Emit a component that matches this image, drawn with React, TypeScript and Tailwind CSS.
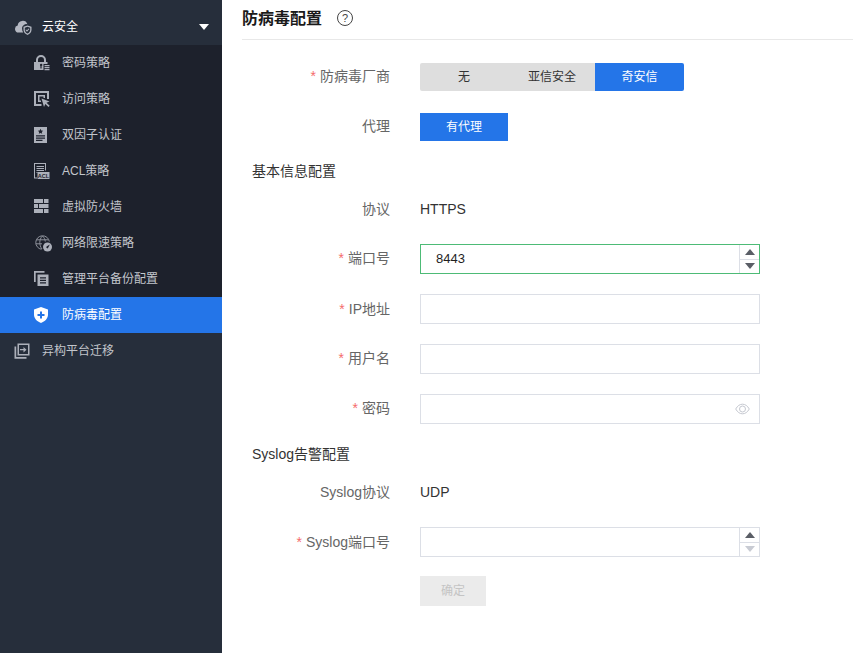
import React from "react";

const font = "font-['Liberation_Sans','Noto_Sans_CJK_SC',sans-serif]";

const Icon = ({ children }: { children: React.ReactNode }) => (
  <svg width="16" height="16" viewBox="0 0 16 16" fill="currentColor" className="shrink-0">
    {children}
  </svg>
);

const subMenus: { label: string; active?: boolean; icon: React.ReactNode }[] = [
  {
    label: "密码策略",
    icon: (
      <Icon>
        <path fillRule="evenodd" d="M0 15V7h2V5a5 5 0 0 1 10 0v2h1.500v2H9.500v6ZM4 7h6V5a3 3 0 0 0-6 0ZM6 10.200a1.200 1.200 0 0 0 .4.900V13.500h1.200v-2.400a1.200 1.200 0 1 0-1.600-.9Z" />
        <path d="M10.500 10h5v1.200h-5zM10.500 12h5v1.200h-5zM10.500 14h5v1.200h-5z" />
      </Icon>
    ),
  },
  {
    label: "访问策略",
    icon: (
      <Icon>
        <path d="M0 0h15v8h-2V2H2v11h5.500v2H0z" />
        <path d="M4 4h7v3H9.500V5.500h-4v4H7V11H4z" />
        <path d="M7.500 7.500l8 3-3 1.300 3.200 3-1.200 1.200-3.200-3-1.300 3z" />
      </Icon>
    ),
  },
  {
    label: "双因子认证",
    icon: (
      <Icon>
        <path fillRule="evenodd" d="M0 0h13v16H0ZM6.500 1.800l.8 1.700 1.900.2-1.400 1.300.4 1.800-1.700-.9-1.700.9.4-1.800-1.400-1.300 1.900-.2ZM2 8.200v1.200h9V8.200ZM2 10.500v1.200h9v-1.200ZM2 12.800v1.200h6.500v-1.200Z" />
      </Icon>
    ),
  },
  {
    label: "ACL策略",
    icon: (
      <Icon>
        <path d="M0 0h12v7.500h-1V1H1v13.500h2V15.500H0z" />
        <path d="M2.500 3h7.500v1H2.500zM2.500 5h7.500v1H2.500zM2.500 7h7.500v1H2.500zM2.500 9h1v1h-1z" />
        <rect x="3.500" y="9" width="12" height="7" />
        <text x="9.500" y="14.800" textAnchor="middle" fontSize="5.500" fontWeight="700" fill="#1d212c" fontFamily="'Liberation Sans', sans-serif">
          ACL
        </text>
      </Icon>
    ),
  },
  {
    label: "虚拟防火墙",
    icon: (
      <Icon>
        <path d="M0 0h9v4H0zM10 0h4.500v4H10zM0 5h4v4H0zM5 5h9.500v4H5zM0 10h9v4H0zM10 10h4.500v4H10z" />
      </Icon>
    ),
  },
  {
    label: "网络限速策略",
    icon: (
      <svg width="17" height="17" viewBox="0 0 17 17" fill="none" className="ml-[1px] shrink-0">
        <g stroke="#8d919b" strokeWidth="1">
          <path d="M6.500 14.300A6.800 6.800 0 1 1 14.300 6.500" />
          <path d="M7.500 1C5.500 3 4.800 5 4.800 7.500c0 2.200.6 4.500 2.200 6.500M7.500 1c1.800 1.800 2.600 3.500 2.800 5.500" />
          <path d="M1.500 4.800h11.500M.8 8.800h6.200" />
        </g>
        <circle cx="12.500" cy="12" r="4.500" fill="#acb0ba" />
        <path d="M14.800 9.500 12 11.300a1 1 0 1 0 1.300 1.300Z" fill="#1d212c" />
      </svg>
    ),
  },
  {
    label: "管理平台备份配置",
    icon: (
      <Icon>
        <path d="M0 0h10.500v1.700H1.700V11H0z" />
        <path fillRule="evenodd" d="M3.500 3.500H14.500V15H3.500ZM6 6.200v1.300h6V6.200ZM6 8.700v1.300h6V8.700ZM6 11.200v1.300h6v-1.300Z" />
      </Icon>
    ),
  },
  {
    label: "防病毒配置",
    active: true,
    icon: (
      <Icon>
        <path fillRule="evenodd" d="M7 0 14 2.500v5C14 11.500 11 14.500 7 16 3 14.500 0 11.500 0 7.500v-5ZM6 4.500V7H3.500v2H6v2.500h2V9h2.500V7H8V4.500Z" />
      </Icon>
    ),
  },
];

const Label = ({ text, required, raise }: { text: string; required?: boolean; raise?: boolean }) => (
  <div className={`w-[148px] shrink-0 text-right text-[14px] text-[#666666] ${raise ? "pb-[2px]" : ""}`}>
    {required && <span className="mr-[4px] text-[#f56c6c]">*</span>}
    {text}
  </div>
);

const Row = ({ children, className }: { children: React.ReactNode; className: string }) => (
  <div className={`flex items-center gap-[30px] ${className}`}>{children}</div>
);

const TextField = ({ children }: { children?: React.ReactNode }) => (
  <div className="flex h-[30px] w-[340px] items-center justify-end border border-[#dcdfe6] bg-white pr-[9px]">
    {children}
  </div>
);

const NumberField = ({ value, focused, downDisabled }: { value?: string; focused?: boolean; downDisabled?: boolean }) => (
  <div className={`flex h-[30px] w-[340px] border bg-white ${focused ? "border-[#4dbb76]" : "border-[#dcdfe6]"}`}>
    <div className="flex-1 pl-[15px] text-[13px] leading-[28px] text-[#1f1f1f]">{value}</div>
    <div className="flex w-[20px] flex-col border-l border-[#dcdfe6]">
      <div className="flex flex-1 items-center justify-center border-b border-[#dcdfe6]">
        <div className="h-0 w-0 border-x-[5px] border-b-[6px] border-x-transparent border-b-[#5a5e66]" />
      </div>
      <div className="flex flex-1 items-center justify-center">
        <div className={`h-0 w-0 border-x-[5px] border-t-[6px] border-x-transparent ${downDisabled ? "border-t-[#c8cbd3]" : "border-t-[#5a5e66]"}`} />
      </div>
    </div>
  </div>
);

export default function App() {
  return (
    <div className={`flex h-[653px] w-[853px] overflow-hidden bg-white ${font}`}>
      <aside className="flex w-[222px] shrink-0 flex-col bg-[#262e3b] pt-[9px] text-[12px]">
        <div className="flex h-[36px] items-center pl-[15px] pr-[13px] text-white">
          <svg width="17" height="16" viewBox="0 0 17 16" fill="#b4b8c2" className="shrink-0">
            <path d="M3.500 13.500a3.500 3.500 0 0 1-.8-6.900A5 5 0 0 1 12.400 5.200 4.500 4.500 0 0 0 7 9c0 1.800.4 3.300 1.200 4.500Z" />
            <path fillRule="evenodd" d="M8.500 7.800 12.500 6.500 16.500 7.800v3.200c0 2.300-1.700 3.800-4 5-2.300-1.200-4-2.700-4-5Zm1.300.9v2.300c0 1.600 1.100 2.700 2.700 3.600 1.600-.9 2.700-2 2.700-3.600V8.700l-2.700-.9Zm.6 2.300 1.600 1.700 2.400-2.700-.7-.6-1.700 1.900-.9-.9Z" />
          </svg>
          <span className="ml-[10px] flex-1">云安全</span>
          <div className="h-0 w-0 border-x-[5px] border-t-[6px] border-x-transparent border-t-white" />
        </div>
        <div className="bg-[#1d212c]">
          {subMenus.map((m) => (
            <div
              key={m.label}
              className={`flex h-[36px] items-center pl-[34px] ${m.active ? "bg-[#2475e8] text-white" : "text-[#c3c6cc]"}`}
            >
              <div className={m.active ? "text-white" : "text-[#acb0ba]"}>{m.icon}</div>
              <span className={m.label === "网络限速策略" ? "ml-[10px]" : "ml-[12px]"}>{m.label}</span>
            </div>
          ))}
        </div>
        <div className="flex h-[36px] items-center pl-[14px] text-[#c3c6cc]">
          <svg width="16" height="16" viewBox="0 0 16 16" fill="#acb0ba" className="shrink-0">
            <path fillRule="evenodd" d="M3.500 0.500h12v12h-12ZM5 2v9h9V2Z" />
            <path d="M0.500 3.500H2.200v10.500h10.300V15.700H.5z" />
            <path d="M6 6h3.500V4l3 2.700-3 2.700V7.300H6z" />
          </svg>
          <span className="ml-[12px]">异构平台迁移</span>
        </div>
      </aside>

      <main className="min-w-0 flex-1 pl-[20px]">
        <div className="flex h-[40px] items-start border-b border-[#e8e8e8] pt-[7px]">
          <span className="text-[16px] font-bold leading-[24px] text-[#1a1a1a]">防病毒配置</span>
          <span className="ml-[15px] mt-[3px] flex h-[16px] w-[16px] items-center justify-center rounded-full border border-[#444444] text-[11px] leading-none text-[#444444]">
            ?
          </span>
        </div>

        <Row className="mt-[23px] h-[28px]">
          <Label text="防病毒厂商" required raise />
          <div className="flex text-[12px]">
            <div className="flex h-[28px] w-[88px] items-center justify-center rounded-l-[2px] bg-[#dedede] text-[#333333]">无</div>
            <div className="flex h-[28px] w-[87px] items-center justify-center bg-[#dedede] pl-[1px] text-[#333333]">亚信安全</div>
            <div className="flex h-[28px] w-[89px] items-center justify-center rounded-r-[2px] bg-[#2475e8] text-white">奇安信</div>
          </div>
        </Row>
        <Row className="mt-[22px] h-[28px]">
          <Label text="代理" raise />
          <div className="flex h-[28px] w-[88px] items-center justify-center bg-[#2475e8] text-[12px] text-white">有代理</div>
        </Row>

        <div className="mt-[20px] pl-[10px] text-[14px] leading-[20px] text-[#333333]">基本信息配置</div>

        <Row className="mt-[18px] h-[20px]">
          <Label text="协议" />
          <span className="text-[14px] text-[#333333]">HTTPS</span>
        </Row>
        <Row className="mt-[25px]">
          <Label text="端口号" required raise />
          <NumberField value="8443" focused />
        </Row>
        <Row className="mt-[20px]">
          <Label text="IP地址" required />
          <TextField />
        </Row>
        <Row className="mt-[20px]">
          <Label text="用户名" required raise />
          <TextField />
        </Row>
        <Row className="mt-[20px]">
          <Label text="密码" required raise />
          <TextField>
            <svg width="15" height="12" viewBox="0 0 15 12" fill="none" stroke="#c5c8d0" strokeWidth="1">
              <path d="M.7 6C2.500 2.800 4.800 1.200 7.500 1.200S12.500 2.800 14.300 6c-1.800 3.200-4.100 4.800-6.800 4.800S2.500 9.200.7 6Z" />
              <circle cx="7.500" cy="6" r="3" />
            </svg>
          </TextField>
        </Row>

        <div className="mt-[20px] pl-[10px] text-[14px] leading-[20px] text-[#333333]">Syslog告警配置</div>

        <Row className="mt-[18px] h-[20px]">
          <Label text="Syslog协议" />
          <span className="text-[14px] text-[#333333]">UDP</span>
        </Row>
        <Row className="mt-[25px]">
          <Label text="Syslog端口号" required />
          <NumberField downDisabled />
        </Row>
        <div className="ml-[178px] mt-[19px] flex h-[30px] w-[66px] items-center justify-center bg-[#ebebeb] text-[12px] text-[#c4c4c4]">
          确定
        </div>
      </main>
    </div>
  );
}
